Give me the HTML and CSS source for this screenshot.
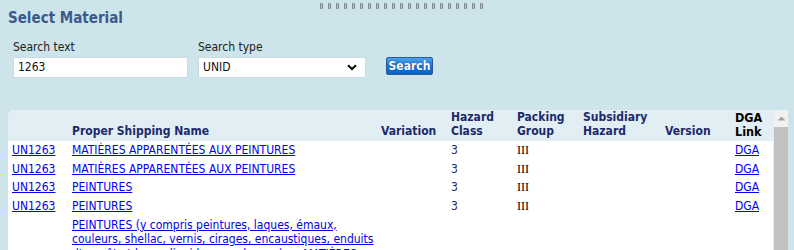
FILE: index.html
```html
<!DOCTYPE html>
<html>
<head>
<meta charset="utf-8">
<link rel="stylesheet" href="styles.css">
</head>
<body>
<div class="grip"></div>
<h1 class="title">Select Material</h1>
<div class="form">
  <div class="field field-text">
    <label class="label">Search text</label>
    <div class="input">1263</div>
  </div>
  <div class="field field-type">
    <label class="label">Search type</label>
    <div class="select"><span>UNID</span>
      <svg class="chev" width="10" height="7" viewBox="0 0 10 7"><path d="M1 1.2 L5 5 L9 1.2" fill="none" stroke="#111" stroke-width="2.2"/></svg>
    </div>
  </div>
  <button class="btn">Search</button>
</div>
<div class="panel">
  <table class="grid">
    <colgroup>
      <col class="c1"><col class="c2"><col class="c3"><col class="c4"><col class="c5"><col class="c6"><col class="c7"><col class="c8">
    </colgroup>
    <thead>
      <tr>
        <th></th>
        <th>Proper Shipping Name</th>
        <th>Variation</th>
        <th>Hazard<br>Class</th>
        <th>Packing<br>Group</th>
        <th>Subsidiary<br>Hazard</th>
        <th>Version</th>
        <th class="dga-h">DGA<br>Link</th>
      </tr>
    </thead>
    <tbody>
      <tr><td><a href="#">UN1263</a></td><td><a href="#">MATIÈRES APPARENTÉES AUX PEINTURES</a></td><td></td><td class="cls">3</td><td class="pg">III</td><td></td><td></td><td><a href="#">DGA</a></td></tr>
      <tr><td><a href="#">UN1263</a></td><td><a href="#">MATIÈRES APPARENTÉES AUX PEINTURES</a></td><td></td><td class="cls">3</td><td class="pg">III</td><td></td><td></td><td><a href="#">DGA</a></td></tr>
      <tr><td><a href="#">UN1263</a></td><td><a href="#">PEINTURES</a></td><td></td><td class="cls">3</td><td class="pg">III</td><td></td><td></td><td><a href="#">DGA</a></td></tr>
      <tr><td><a href="#">UN1263</a></td><td><a href="#">PEINTURES</a></td><td></td><td class="cls">3</td><td class="pg">III</td><td></td><td></td><td><a href="#">DGA</a></td></tr>
      <tr><td></td><td><a href="#">PEINTURES (y compris peintures, laques, émaux,<br>couleurs, shellac, vernis, cirages, encaustiques, enduits<br>d'apprêt et bases liquides pour laques) ou MATIÈRES<br>APPARENTÉES AUX PEINTURES</a></td><td></td><td class="cls"></td><td class="pg"></td><td></td><td></td><td></td></tr>
    </tbody>
  </table>
  <div class="scroll">
    <div class="scroll-btn"><svg width="9" height="5" viewBox="0 0 9 5"><path d="M0.5 4.5 L4.5 0.5 L8.5 4.5 Z" fill="#a3a3a3"/></svg></div>
    <div class="scroll-track"></div>
  </div>
</div>
</body>
</html>
```
FILE: styles.css
```css
html, body {
  margin: 0;
  padding: 0;
  height: 250px;
  overflow: hidden;
}
body {
  background: #cde4ea;
  font-family: Tahoma, "DejaVu Sans Condensed", "DejaVu Sans", sans-serif;
  font-size: 12px;
  color: #222;
}
.grip {
  width: 166px;
  height: 6px;
  margin: 3px 0 0 320px;
  background: repeating-linear-gradient(90deg, #7e8a8f 0 1px, #b5c4c9 1px 2px, #7e8a8f 2px 3px, transparent 3px 8px);
}
.title {
  margin: 0 0 0 8px;
  font-size: 15px;
  line-height: 19px;
  font-weight: bold;
  color: #3b5a8c;
}
.form {
  display: flex;
  align-items: flex-end;
  margin: 12px 0 0 13px;
}
.field {
  display: flex;
  flex-direction: column;
}
.field-text { width: 175px; }
.field-type { width: 168px; margin-left: 10px; }
.label {
  font-size: 12px;
  line-height: 15px;
  margin-bottom: 2px;
  color: #222;
}
.input, .select {
  box-sizing: border-box;
  height: 21px;
  background: #fff;
  border: 1px solid #c6dde6;
  font-size: 12px;
  line-height: 19px;
  padding: 0 4px;
  color: #111;
}
.select {
  display: flex;
  justify-content: space-between;
  align-items: center;
  padding: 0 8px 0 4px;
}
.btn {
  margin: 0 0 3px 20px;
  box-sizing: border-box;
  width: 47px;
  height: 18px;
  padding: 0;
  border: 1px solid #2a5a9a;
  border-radius: 2px;
  background: linear-gradient(#4aa3ea, #1478d6 50%, #0a62c2);
  color: #fff;
  font-family: Tahoma, "DejaVu Sans Condensed", "DejaVu Sans", sans-serif;
  font-size: 12px;
  font-weight: bold;
  text-shadow: 0 0 1px #0a3a7a;
}
.panel {
  display: flex;
  margin: 32px 0 0 8px;
  width: 780px;
}
.grid {
  width: 765px;
  table-layout: fixed;
  border-collapse: collapse;
  background: #fff;
  border-top-left-radius: 6px;
  overflow: hidden;
}
.c1 { width: 60px; }
.c2 { width: 309px; }
.c3 { width: 70px; }
.c4 { width: 66px; }
.c5 { width: 66px; }
.c6 { width: 82px; }
.c7 { width: 70px; }
.c8 { width: 42px; }
.grid th {
  background: #e1eef4;
  height: 31px;
  box-sizing: border-box;
  padding: 0 4px 3px;
  text-align: left;
  vertical-align: bottom;
  font-size: 12px;
  line-height: 14px;
  font-weight: bold;
  color: #1c2a6a;
}
.grid th:first-child { border-top-left-radius: 6px; }
.grid th.dga-h {
  color: #000;
  font-size: 12.5px;
  line-height: 14px;
  padding-bottom: 2px;
}
.grid td {
  padding: 2px 4px;
  line-height: 14.67px;
  vertical-align: top;
  font-size: 12px;
  white-space: nowrap;
}
.grid a {
  color: #0000ee;
  text-decoration: underline;
}
.cls { color: #1c2a6a; }
.pg {
  font-family: "Liberation Serif", serif;
  font-size: 13px;
  color: #000;
}
.scroll {
  width: 15px;
  display: flex;
  flex-direction: column;
  border-left: 1px solid #e6eef0;
  background: #c1c1c1;
}
.scroll-btn {
  height: 17px;
  background: #f1f1f1;
  display: flex;
  justify-content: center;
  align-items: center;
}
.scroll-track {
  flex: 1;
  background: #c1c1c1;
}
```
